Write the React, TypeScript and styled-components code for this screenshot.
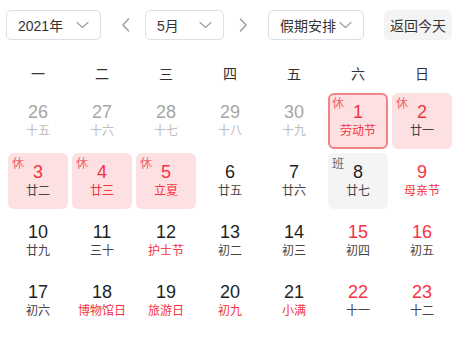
import React from 'react';
import styled, {createGlobalStyle} from 'styled-components';

const GlobalStyle = createGlobalStyle`
    body {
        margin: 0;
        background: #fff;
        font-family: "Liberation Sans", "Noto Sans CJK SC", sans-serif;
        color: #333;
    }
`;

type Tone = 'muted' | 'normal' | 'red';

interface Day {
    num: number;
    lunar: string;
    tone: Tone;
    lunarRed?: boolean;
    tag?: '休' | '班';
    selected?: boolean;
}

const WEEKDAYS = ['一', '二', '三', '四', '五', '六', '日'];

const DAYS: Day[] = [
    {num: 26, lunar: '十五', tone: 'muted'},
    {num: 27, lunar: '十六', tone: 'muted'},
    {num: 28, lunar: '十七', tone: 'muted'},
    {num: 29, lunar: '十八', tone: 'muted'},
    {num: 30, lunar: '十九', tone: 'muted'},
    {num: 1, lunar: '劳动节', tone: 'red', lunarRed: true, tag: '休', selected: true},
    {num: 2, lunar: '廿一', tone: 'red', tag: '休'},
    {num: 3, lunar: '廿二', tone: 'red', tag: '休'},
    {num: 4, lunar: '廿三', tone: 'red', lunarRed: true, tag: '休'},
    {num: 5, lunar: '立夏', tone: 'red', lunarRed: true, tag: '休'},
    {num: 6, lunar: '廿五', tone: 'normal'},
    {num: 7, lunar: '廿六', tone: 'normal'},
    {num: 8, lunar: '廿七', tone: 'normal', tag: '班'},
    {num: 9, lunar: '母亲节', tone: 'red', lunarRed: true},
    {num: 10, lunar: '廿九', tone: 'normal'},
    {num: 11, lunar: '三十', tone: 'normal'},
    {num: 12, lunar: '护士节', tone: 'normal', lunarRed: true},
    {num: 13, lunar: '初二', tone: 'normal'},
    {num: 14, lunar: '初三', tone: 'normal'},
    {num: 15, lunar: '初四', tone: 'red'},
    {num: 16, lunar: '初五', tone: 'red'},
    {num: 17, lunar: '初六', tone: 'normal'},
    {num: 18, lunar: '博物馆日', tone: 'normal', lunarRed: true},
    {num: 19, lunar: '旅游日', tone: 'normal', lunarRed: true},
    {num: 20, lunar: '初九', tone: 'normal', lunarRed: true},
    {num: 21, lunar: '小满', tone: 'normal', lunarRed: true},
    {num: 22, lunar: '十一', tone: 'red'},
    {num: 23, lunar: '十二', tone: 'red'},
];

const Page = styled.div`
    padding: 10px 9px 0 6px;
`;

const Toolbar = styled.div`
    display: flex;
    align-items: center;
    height: 30px;
`;

const Select = styled.div<{$width: number}>`
    box-sizing: border-box;
    display: flex;
    align-items: center;
    justify-content: space-between;
    flex-shrink: 0;
    height: 30px;
    width: ${p => p.$width}px;
    padding: 0 10px 0 11px;
    border: 1px solid #dcdfe6;
    border-radius: 5px;
    font-size: 14px;
    color: #333;
`;

const ArrowButton = styled.div<{$left: number; $right: number}>`
    display: flex;
    align-items: center;
    justify-content: center;
    flex-shrink: 0;
    width: 20px;
    height: 30px;
    margin: 0 ${p => p.$right}px 0 ${p => p.$left}px;
`;

const TodayButton = styled.div`
    box-sizing: border-box;
    display: flex;
    align-items: center;
    justify-content: center;
    flex-shrink: 0;
    height: 30px;
    width: 68px;
    margin-left: 20px;
    border-radius: 5px;
    background: #f4f4f5;
    font-size: 14px;
    color: #333;
`;

const WeekHeader = styled.div`
    display: grid;
    grid-template-columns: repeat(7, 60px);
    column-gap: 4px;
    margin: 18px 0 5px 2px;
    height: 30px;
`;

const WeekCell = styled.div`
    display: flex;
    align-items: center;
    justify-content: center;
    font-size: 14px;
    color: #333;
`;

const Grid = styled.div`
    display: grid;
    grid-template-columns: repeat(7, 60px);
    grid-auto-rows: 56px;
    gap: 4px;
    margin-left: 2px;
`;

const Cell = styled.div<{$bg: string; $selected?: boolean}>`
    position: relative;
    box-sizing: border-box;
    display: flex;
    flex-direction: column;
    align-items: center;
    padding-top: 7px;
    border-radius: 6px;
    background: ${p => p.$bg};
    border: 2px solid ${p => (p.$selected ? '#f08484' : 'transparent')};
`;

const Num = styled.div<{$tone: Tone}>`
    font-size: 18px;
    line-height: 20px;
    color: ${p => (p.$tone === 'muted' ? '#a6a6a6' : p.$tone === 'red' ? '#f5333f' : '#1f1f1f')};
`;

const Lunar = styled.div<{$tone: Tone; $red?: boolean}>`
    margin-top: 1px;
    font-size: 12px;
    line-height: 16px;
    white-space: nowrap;
    color: ${p => (p.$tone === 'muted' ? '#bdbdbd' : p.$red ? '#f5333f' : '#444')};
`;

const Tag = styled.span<{$rest: boolean}>`
    position: absolute;
    top: 2px;
    left: 2px;
    font-size: 12px;
    line-height: 14px;
    color: ${p => (p.$rest ? '#f2606a' : '#666')};
`;

const Chevron = () => (
    <svg width='15' height='14' viewBox='0 0 15 14' fill='none'>
        <path d='M2 4.5 L7.5 9.5 L13 4.5' stroke='#a3a3ad' strokeWidth='1.3' strokeLinecap='round' strokeLinejoin='round'/>
    </svg>
);

const Arrow = ({dir}: {dir: 'left' | 'right'}) => (
    <svg width='10' height='16' viewBox='0 0 10 16' fill='none'>
        <path
            d={dir === 'left' ? 'M7.5 2 L2 8 L7.5 14' : 'M2.5 2 L8 8 L2.5 14'}
            stroke='#9a9aa6'
            strokeWidth='1.4'
            strokeLinecap='round'
            strokeLinejoin='round'
        />
    </svg>
);

const cellBg = (d: Day) => {
    if (d.tag === '休') {
        return '#fde0e1';
    }
    if (d.tag === '班') {
        return '#f4f4f5';
    }
    return 'transparent';
};

export default function App() {
    return (
        <Page>
            <GlobalStyle/>
            <Toolbar>
                <Select $width={95}>
                    <span>{'2021年'}</span>
                    <Chevron/>
                </Select>
                <ArrowButton $left={15} $right={9}>
                    <Arrow dir='left'/>
                </ArrowButton>
                <Select $width={79}>
                    <span>{'5月'}</span>
                    <Chevron/>
                </Select>
                <ArrowButton $left={9} $right={15}>
                    <Arrow dir='right'/>
                </ArrowButton>
                <Select $width={96}>
                    <span>{'假期安排'}</span>
                    <Chevron/>
                </Select>
                <TodayButton>{'返回今天'}</TodayButton>
            </Toolbar>
            <WeekHeader>
                {WEEKDAYS.map(w => <WeekCell key={w}>{w}</WeekCell>)}
            </WeekHeader>
            <Grid>
                {DAYS.map(d => (
                    <Cell key={`${d.tone}-${d.num}`} $bg={cellBg(d)} $selected={d.selected}>
                        {d.tag && <Tag $rest={d.tag === '休'}>{d.tag}</Tag>}
                        <Num $tone={d.tone}>{d.num}</Num>
                        <Lunar $tone={d.tone} $red={d.lunarRed}>{d.lunar}</Lunar>
                    </Cell>
                ))}
            </Grid>
        </Page>
    );
}
